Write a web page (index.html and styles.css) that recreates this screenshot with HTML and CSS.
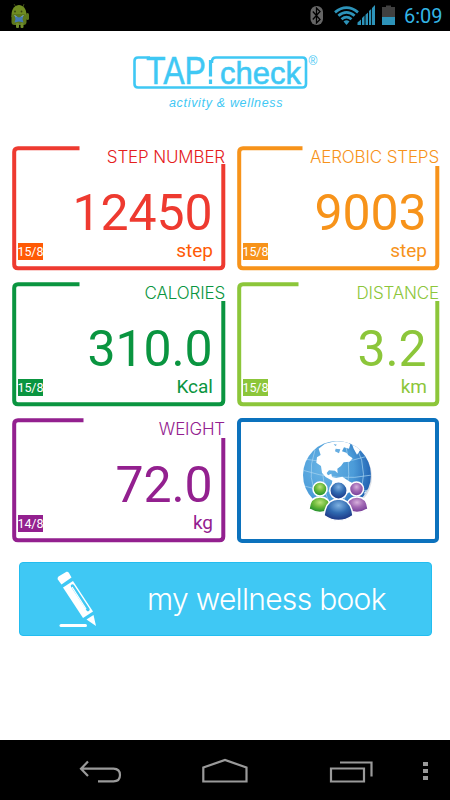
FILE: index.html
```html
<!DOCTYPE html>
<html lang="en">
<head>
    <meta charset="UTF-8">
    <meta name="viewport" content="width=device-width, initial-scale=1.0">
    <title>TAP!check</title>
    <link rel="stylesheet" href="styles.css">
</head>
<body>
    <!-- Status bar -->
    <header class="status-bar">
        <svg class="droid" width="20" height="26" viewBox="0 0 20 26">
            <path d="M4 1l2 3M14 1l-1 3" stroke="#3c4a16" stroke-width="1"/>
            <path d="M1.500 12C1.500 -1.500 16.500 -1.500 16.500 12V14H1.500z" fill="#708c22"/>
            <rect x="1.500" y="11" width="15" height="11" rx="3" fill="#5c771c"/>
            <rect x="16" y="10" width="3" height="7" rx="1.500" fill="#5c771c"/>
            <rect x="6" y="20" width="3" height="5" rx="1" fill="#708c2c"/>
            <rect x="10.500" y="20" width="3" height="5" rx="1" fill="#708c2c"/>
            <path d="M4.500 12.500l4.500 2 4.500-2-1 3.500 1 3.500-4.500-1-4.500 1 1-3.500z" fill="#4479b4"/>
            <path d="M4.500 12.500l2 1M13.500 12.500l-2 1" stroke="#8fb0c4" stroke-width="1"/>
            <circle cx="5" cy="8.500" r="0.900" fill="#37410f"/>
            <circle cx="11.500" cy="8.500" r="0.900" fill="#37410f"/>
        </svg>
        <div class="status-icons">
            <svg width="86" height="22" viewBox="310 5 86 22">
                <rect x="310.500" y="6" width="12.500" height="19" rx="6" fill="#666"/>
                <path d="M312.800 11.500L320 19.500L316.500 23V8L320 11.500L312.800 19.500" fill="none" stroke="#000" stroke-width="1.300"/>
                <g fill="none" stroke="#2d93b9" stroke-width="2.800">
                    <path d="M335 12.300Q346.500 3 358 12.300"/>
                    <path d="M338.400 15.800Q346.500 9 354.600 15.800"/>
                    <path d="M341.500 19.200Q346.500 15 351.500 19.200"/>
                </g>
                <path d="M343.500 21.500Q346.500 18.800 349.500 21.500L346.500 25z" fill="#2d93b9"/>
                <path d="M357.500 25V22.500L361 19.500V25zM362 25V18L364.500 15.500V25zM365.500 25V14.800L368 12.500V25zM369 25V11L371.200 9V25zM372 25V8L375 5V25z" fill="#2d93b9"/>
                <path d="M382 7h4v-1.500h5V7h4v18h-13z" fill="#404040"/>
                <path d="M382 17h13v8h-13z" fill="#2d93b9"/>
            </svg>
            <span class="clock">6:09</span>
        </div>
    </header>

    <main class="content">
        <!-- Logo -->
        <svg class="logo" width="210" height="70" viewBox="120 45 210 70">
            <path d="M150 57.500H138Q134.500 57.500 134.500 61V84Q134.500 87.500 138 87.500H302.500Q306 87.500 306 84V61Q306 57.500 302.500 57.500H216Q212 57.500 212 61.500V63" fill="none" stroke="#3fc8f4" stroke-width="2.600"/>
            <text class="logo-tap" x="146" y="84" textLength="60" lengthAdjust="spacingAndGlyphs">TAP</text>
            <path d="M210.500 60V76.500M210.500 79.500V84" stroke="#3fc8f4" stroke-width="3.200"/>
            <text class="logo-check" x="220" y="84" textLength="81" lengthAdjust="spacingAndGlyphs">check</text>
            <text class="logo-reg" x="308.500" y="65">®</text>
            <text class="logo-tagline" x="169" y="107" textLength="113.500">activity &amp; wellness</text>
        </svg>

        <!-- Measurements -->
        <div class="cards">
            <section class="card red">
                <svg class="frame" width="214" height="125" viewBox="0 0 214 125">
                    <path d="M67.500 2.200H6Q2.200 2.200 2.200 6V118.500Q2.200 122.300 6 122.300H207.500Q211.300 122.300 211.300 118.500V18"/>
                </svg>
                <h2>STEP NUMBER</h2>
                <p class="value">12450</p>
                <div class="card-foot"><span class="date">15/8</span><span class="unit">step</span></div>
            </section>
            <section class="card orange">
                <svg class="frame" width="203" height="125" viewBox="0 0 203 125">
                    <path d="M65.500 2.200H6Q2.200 2.200 2.200 6V118.500Q2.200 122.300 6 122.300H196.500Q200.300 122.300 200.300 118.500V20"/>
                </svg>
                <h2>AEROBIC STEPS</h2>
                <p class="value">9003</p>
                <div class="card-foot"><span class="date">15/8</span><span class="unit">step</span></div>
            </section>
            <section class="card green">
                <svg class="frame" width="214" height="125" viewBox="0 0 214 125">
                    <path d="M67.500 2.200H6Q2.200 2.200 2.200 6V118.500Q2.200 122.300 6 122.300H207.500Q211.300 122.300 211.300 118.500V19"/>
                </svg>
                <h2>CALORIES</h2>
                <p class="value">310.0</p>
                <div class="card-foot"><span class="date">15/8</span><span class="unit">Kcal</span></div>
            </section>
            <section class="card lime">
                <svg class="frame" width="203" height="125" viewBox="0 0 203 125">
                    <path d="M61.500 2.200H6Q2.200 2.200 2.200 6V118.500Q2.200 122.300 6 122.300H196.500Q200.300 122.300 200.300 118.500V19"/>
                </svg>
                <h2>DISTANCE</h2>
                <p class="value">3.2</p>
                <div class="card-foot"><span class="date">15/8</span><span class="unit">km</span></div>
            </section>
            <section class="card purple">
                <svg class="frame" width="214" height="125" viewBox="0 0 214 125">
                    <path d="M71.500 2.200H6Q2.200 2.200 2.200 6V118.500Q2.200 122.300 6 122.300H207.500Q211.300 122.300 211.300 118.500V20"/>
                </svg>
                <h2>WEIGHT</h2>
                <p class="value">72.0</p>
                <div class="card-foot"><span class="date">14/8</span><span class="unit">kg</span></div>
            </section>
            <section class="card community">
                <svg width="74" height="84" viewBox="301 438 74 84">
                    <defs>
                        <radialGradient id="globe" cx="0.3" cy="0.4" r="0.75">
                            <stop offset="0" stop-color="#69b5e6"/>
                            <stop offset="0.6" stop-color="#4b9bd8"/>
                            <stop offset="1" stop-color="#1c5cae"/>
                        </radialGradient>
                        <radialGradient id="g" cx="0.5" cy="0.35" r="0.6">
                            <stop offset="0" stop-color="#b9e27a"/>
                            <stop offset="0.5" stop-color="#6cb93a"/>
                            <stop offset="1" stop-color="#23912c"/>
                        </radialGradient>
                        <radialGradient id="b" cx="0.5" cy="0.3" r="0.7">
                            <stop offset="0" stop-color="#7fb2e2"/>
                            <stop offset="0.5" stop-color="#2f69b0"/>
                            <stop offset="1" stop-color="#1c3584"/>
                        </radialGradient>
                        <radialGradient id="p" cx="0.5" cy="0.35" r="0.6">
                            <stop offset="0" stop-color="#d7b0dc"/>
                            <stop offset="0.5" stop-color="#a169b4"/>
                            <stop offset="1" stop-color="#79409a"/>
                        </radialGradient>
                        <clipPath id="disc"><circle cx="337" cy="475" r="34"/></clipPath>
                    </defs>
                    <circle cx="339" cy="477" r="33" fill="#dce0e6"/>
                    <circle cx="337" cy="475" r="34" fill="url(#globe)"/>
                    <g clip-path="url(#disc)">
                        <g fill="none" stroke="#a8d4f0" stroke-width="0.700">
                            <path d="M304 459Q340 466 368 456M302 470Q338 482 372 475M304 486Q336 496 370 490M315 450Q305 478 320 503M329 444Q316 476 331 508M345 442Q354 474 342 508M356 446Q371 474 356 504"/>
                        </g>
                        <!-- Americas and Greenland -->
                        <g transform="translate(225 410) scale(0.3333)" fill="#fff">
                            <path d="M274 158L276 142L287 135L281 116L300 101L330 94L362 94L376 102L372 116L357 112L351 124L364 128L370 136L383 145L374 155L356 157L348 168L337 176L338 190L330 182L312 181L305 189L309 196L319 191L321 201L334 204L352 200L372 214L388 222L384 240L350 260L318 236L322 212L302 201L291 188L288 168z"/>
                            <path d="M378 94L405 101L420 122L408 117L396 134L386 116z"/>
                            <path d="M332 116l14 2-4 12-12-6zM326 102l10 2-5 4z" fill="#66ade1"/>
                            <path d="M418 247l18-14v24l-16 12z" fill="#e2effa"/>
                        </g>
                    </g>
                    <g stroke="#fff" stroke-width="1.500">
                        <path d="M309 509Q310 497 320 497T331 509Q320 516 309 509z" fill="url(#g)"/>
                        <circle cx="320" cy="489" r="7" fill="url(#g)"/>
                        <path d="M346 509Q347 497 357 497T368 509Q357 516 346 509z" fill="url(#p)"/>
                        <circle cx="356.500" cy="489" r="7" fill="url(#p)"/>
                        <path d="M324 515.500Q326 499 338.500 499T353 515.500Q338.500 525.500 324 515.500z" fill="url(#b)"/>
                        <circle cx="338.500" cy="490.500" r="8.700" fill="url(#b)"/>
                    </g>
                </svg>
            </section>
        </div>

        <button class="book-button">
            <svg width="42" height="58" viewBox="55 570 42 58">
                <g fill="#fff">
                    <path d="M57.500 576.500L65.500 571.800Q67 571.500 68 573L70.500 577.500L60.500 584.500L56.800 579.500Q56 577.800 57.500 576.500z"/>
                    <path d="M62 587.500L72 581L92 611.500L82 618z"/>
                    <path d="M85.500 619.500L92.500 615L95 626z"/>
                    <rect x="58.500" y="624" width="27.500" height="3" rx="1.500"/>
                </g>
                <path d="M71.500 586L87 609.500" stroke="#3fc8f4" stroke-width="3.400" stroke-linecap="round"/>
                <path d="M71 587L85 609" stroke="#fff" stroke-width="1.300"/>
            </svg>
            <span>my wellness book</span>
        </button>
    </main>

    <!-- Navigation bar -->
    <nav class="nav-bar">
        <svg width="450" height="60" viewBox="0 740 450 60" fill="none" stroke="#9a9a9a" stroke-width="2.200">
            <path d="M88 761.500L81 768.700L88 776M81 768.700H113.500Q120 769 120 775Q120 781.300 113.500 781.300H98"/>
            <path d="M203.300 781.500V767.500L225 760L246.500 767.500V781.500z"/>
            <path d="M331 768.500H364V781.500H331zM340 762.500H371.500V776.500"/>
            <path d="M423 762h5v4h-5zM423 769h5v4h-5zM423 776h5v4h-5z" fill="#9a9a9a" stroke="none"/>
        </svg>
    </nav>
</body>
</html>
```

FILE: styles.css
```css
* {
    box-sizing: border-box;
}
body {
    margin: 0;
    width: 450px;
    height: 800px;
    display: flex;
    flex-direction: column;
    background: #fff;
    font-family: Roboto, sans-serif;
    overflow: hidden;
}
svg {
    display: block;
}
.status-bar {
    height: 31px;
    flex: none;
    display: flex;
    justify-content: space-between;
    background: #000;
    padding: 3px 7.5px 0 10px;
}
.status-icons {
    display: flex;
    gap: 8px;
    padding-top: 2px;
}
.clock {
    color: #33b5e5;
    font-size: 20px;
    line-height: 22px;
}
.content {
    flex: 1;
    display: flex;
    flex-direction: column;
    padding: 14px 11px 0 11.5px;
}
.logo {
    margin-left: 108.5px;
}
.logo text {
    fill: #3fc8f4;
    font-family: "Liberation Sans", sans-serif;
}
.logo .logo-tap {
    font-size: 39px;
    stroke: #3fc8f4;
    stroke-width: 0.5;
}
.logo .logo-check {
    font-size: 32px;
    stroke: #3fc8f4;
    stroke-width: 0.6;
}
.logo .logo-reg {
    font-size: 12px;
}
.logo .logo-tagline {
    font-size: 12.5px;
    font-style: italic;
}
.cards {
    margin-top: 31px;
    display: grid;
    grid-template-columns: 213.5px 202.5px;
    grid-auto-rows: 124.5px;
    gap: 11.5px;
}
.card {
    position: relative;
    display: flex;
    flex-direction: column;
    align-items: flex-end;
}
.frame {
    position: absolute;
    top: 0;
    left: 0;
    fill: none;
    stroke: currentColor;
    stroke-width: 4;
}
.card h2 {
    margin: 1px 0 0;
    font-family: Inter, sans-serif;
    font-weight: 300;
    font-size: 17px;
    line-height: 21px;
    letter-spacing: -0.15px;
}
.value {
    margin: 19px 12.5px 0 0;
    font-size: 50px;
    line-height: 52px;
    letter-spacing: -0.1px;
}
.card-foot {
    align-self: stretch;
    display: flex;
    justify-content: space-between;
    align-items: flex-start;
    padding: 1px 12px 0 6px;
}
.date {
    margin-top: 3px;
    width: 25px;
    height: 17px;
    background: currentColor;
    font-size: 12.5px;
    line-height: 18px;
    letter-spacing: -0.1px;
    -webkit-text-fill-color: #fff;
    white-space: nowrap;
}
.unit {
    font-size: 19px;
    line-height: 22px;
}
.red {
    color: #ee3a30;
}
.red h2 {
    color: #e5201c;
}
.red .date,
.red .unit {
    color: #ff5a05;
}
.orange {
    color: #f7931a;
}
.green {
    color: #0a9540;
}
.lime {
    color: #8cc63a;
}
.purple {
    color: #93208f;
}
.community {
    border: 4px solid #0c72bd;
    border-radius: 5px;
    align-items: center;
    justify-content: center;
}
.book-button {
    margin: 19px 7.5px 0;
    height: 74px;
    display: flex;
    align-items: center;
    gap: 49px;
    padding: 0 0 0 36px;
    background: #3fc8f4;
    border: 1px solid #22bdf0;
    border-radius: 4px;
    color: #fff;
    font-family: Inter, sans-serif;
    font-weight: 300;
    font-size: 30px;
    letter-spacing: -0.7px;
}
.nav-bar {
    height: 60px;
    flex: none;
    background: #000;
}
```
